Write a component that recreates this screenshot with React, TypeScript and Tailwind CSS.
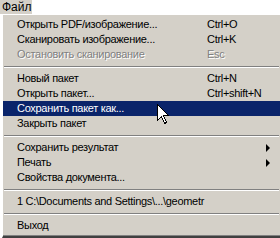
import React from 'react';

type Item =
  | { kind: 'sep' }
  | {
      kind: 'item';
      label: string;
      shortcut?: string;
      disabled?: boolean;
      active?: boolean;
      submenu?: boolean;
    };

const items: Item[] = [
  { kind: 'item', label: 'Открыть PDF/изображение...', shortcut: 'Ctrl+O' },
  { kind: 'item', label: 'Сканировать изображение...', shortcut: 'Ctrl+K' },
  { kind: 'item', label: 'Остановить сканирование', shortcut: 'Esc', disabled: true },
  { kind: 'sep' },
  { kind: 'item', label: 'Новый пакет', shortcut: 'Ctrl+N' },
  { kind: 'item', label: 'Открыть пакет...', shortcut: 'Ctrl+shift+N' },
  { kind: 'item', label: 'Сохранить пакет как...', active: true },
  { kind: 'item', label: 'Закрыть пакет' },
  { kind: 'sep' },
  { kind: 'item', label: 'Сохранить результат', submenu: true },
  { kind: 'item', label: 'Печать', submenu: true },
  { kind: 'item', label: 'Свойства документа...' },
  { kind: 'sep' },
  { kind: 'item', label: '1 C:\\Documents and Settings\\...\\geometr' },
  { kind: 'sep' },
  { kind: 'item', label: 'Выход' },
];

function Cursor() {
  return (
    <svg
      className="absolute left-[157px] top-[104px]"
      width="13"
      height="21"
      viewBox="0 0 13 21"
    >
      <path
        d="M0.5 0.5 L0.5 16.5 L4.5 12.5 L7.5 19.5 L9.5 18.5 L6.5 11.5 L11.5 11.5 Z"
        fill="#fff"
        stroke="#000"
        strokeWidth="1"
        shapeRendering="crispEdges"
      />
    </svg>
  );
}

export default function App() {
  return (
    <div
      className="relative w-[280px] h-[238px] bg-white overflow-hidden text-[11px] leading-none text-black"
      style={{ fontFamily: '"Liberation Sans", Arial, sans-serif' }}
    >
      <div className="h-[14px] w-[32px] bg-[#d4d0c8] pl-[2px] flex items-center text-[12px]">
        Файл
      </div>
      <div className="ml-[2px] h-[224px] bg-[#d4d0c8] border-l border-t border-l-white border-t-white border-b-2 border-b-[#404040] shadow-[inset_0_-1px_0_#808080] pt-[2px] tracking-[-0.3px]">
        {items.map((it, i) =>
          it.kind === 'sep' ? (
            <div key={i} className="h-[9px] flex flex-col justify-center px-[1px]">
              <div className="h-[1px] bg-[#808080]" />
              <div className="h-[1px] bg-white" />
            </div>
          ) : (
            <div
              key={i}
              className={`h-[15px] flex items-center pl-[14px] pr-2 ${
                it.active ? 'bg-[#0a246a] text-white' : ''
              }`}
            >
              <span
                className={`w-[190px] whitespace-nowrap ${
                  it.disabled ? 'text-[#808080] [text-shadow:1px_1px_0_#fff]' : ''
                }`}
              >
                {it.label}
              </span>
              {it.shortcut && (
                <span
                  className={`whitespace-nowrap ${
                    it.disabled ? 'text-[#808080] [text-shadow:1px_1px_0_#fff]' : ''
                  }`}
                >
                  {it.shortcut}
                </span>
              )}
              {it.submenu && (
                <span className="ml-auto mr-[2px] w-0 h-0 border-y-[4px] border-y-transparent border-l-[4px] border-l-black" />
              )}
            </div>
          )
        )}
      </div>
      <Cursor />
    </div>
  );
}
